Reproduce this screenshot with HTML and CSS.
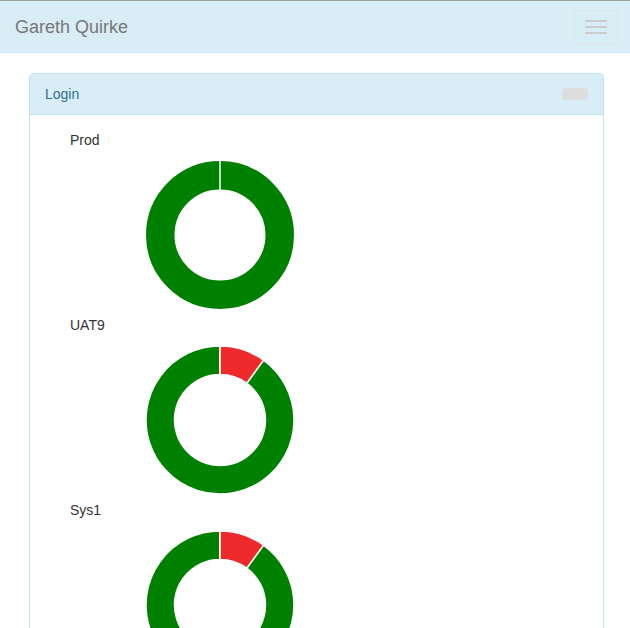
FILE: index.html
```html
<!DOCTYPE html>
<html>
<head>
<meta charset="utf-8">
<link rel="stylesheet" href="styles.css">
</head>
<body>
<nav class="navbar">
  <span class="brand">Gareth Quirke</span>
  <button class="toggle" type="button"><span class="bar"></span><span class="bar"></span><span class="bar"></span></button>
</nav>
<main class="container">
  <section class="panel">
    <div class="panel-heading">
      <span class="panel-title">Login</span>
      <span class="pill"></span>
    </div>
    <div class="panel-body">
      <div class="env">
        <div class="env-label">Prod</div>
        <svg class="donut" width="150" height="150" viewBox="0 0 150 150">
          <circle cx="75" cy="75" r="59.75" fill="none" stroke="#008000" stroke-width="28.5"/>
          <line x1="75" y1="0.5" x2="75" y2="30" stroke="#fff" stroke-width="1.5"/>
        </svg>
      </div>
      <div class="env">
        <div class="env-label">UAT9</div>
        <svg class="donut" width="150" height="150" viewBox="0 0 150 150">
          <path d="M 118.50 15.13 A 74 74 0 1 1 75 1 L 75 29.5 A 45.5 45.5 0 1 0 101.74 38.19 Z" fill="#008000" stroke="#fff" stroke-width="1.5"/>
          <path d="M 75 1 A 74 74 0 0 1 118.50 15.13 L 101.74 38.19 A 45.5 45.5 0 0 0 75 29.5 Z" fill="#ee2a2c" stroke="#fff" stroke-width="1.5"/>
        </svg>
      </div>
      <div class="env">
        <div class="env-label">Sys1</div>
        <svg class="donut" width="150" height="150" viewBox="0 0 150 150">
          <path d="M 118.50 15.13 A 74 74 0 1 1 75 1 L 75 29.5 A 45.5 45.5 0 1 0 101.74 38.19 Z" fill="#008000" stroke="#fff" stroke-width="1.5"/>
          <path d="M 75 1 A 74 74 0 0 1 118.50 15.13 L 101.74 38.19 A 45.5 45.5 0 0 0 75 29.5 Z" fill="#ee2a2c" stroke="#fff" stroke-width="1.5"/>
        </svg>
      </div>
    </div>
  </section>
</main>
</body>
</html>
```
FILE: styles.css
```css
html { overflow: hidden; }
body {
  margin: 0;
  font-family: "Liberation Sans", Arial, sans-serif;
  font-size: 14px;
  line-height: 20px;
  color: #333;
  background: #fff;
}
.navbar {
  display: flex;
  align-items: center;
  justify-content: space-between;
  height: 51px;
  background: #d9edf7;
  border-top: 1px solid #a3a3a3;
  border-bottom: 1px solid #d2e5ee;
  padding: 0 12px 0 15px;
}
.brand {
  font-size: 18px;
  color: #777;
  line-height: 20px;
  margin-top: 1px;
}
.toggle {
  display: flex;
  flex-direction: column;
  gap: 4px;
  width: 44px;
  height: 34px;
  padding: 9px 10px;
  background: transparent;
  border: 1px solid #dde3e6;
  border-radius: 4px;
  box-sizing: border-box;
  margin-top: 1px;
}
.bar {
  display: block;
  width: 22px;
  height: 2px;
  background: #ccc;
  border-radius: 1px;
}
.container {
  padding: 20px 26px 0 29px;
}
.panel {
  border: 1px solid #bce8f1;
  border-radius: 4px;
}
.panel-heading {
  display: flex;
  align-items: center;
  justify-content: space-between;
  padding: 10px 15px;
  background: #d9edf7;
  border-bottom: 1px solid #bce8f1;
  border-radius: 3px 3px 0 0;
}
.panel-title {
  color: #31708f;
}
.pill {
  width: 26px;
  height: 12px;
  background: #ddd;
  border-radius: 4px;
}
.panel-body {
  padding: 15px 15px 0 15px;
}
.env {
  display: flex;
  flex-direction: column;
  padding-bottom: 5px;
}
.env-label {
  margin-left: 25px;
  height: 20px;
}
.donut {
  display: block;
  margin: 10px 0 0 100px;
}
```
